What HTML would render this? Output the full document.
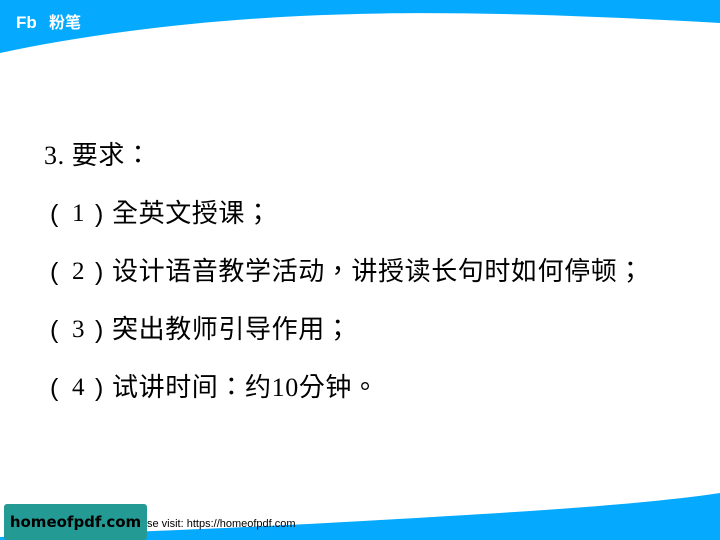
<!DOCTYPE html>
<html><head><meta charset="utf-8"><style>
body{margin:0;width:720px;height:540px;overflow:hidden;background:#fff;position:relative;font-family:"Liberation Serif","Noto Sans CJK TC",sans-serif}
.l{position:absolute;left:112px;font-size:26px;letter-spacing:0.6px;color:#000;white-space:nowrap;line-height:30px}
.a,.b,.d{position:absolute;font-size:25px;line-height:30px;color:#000}
.a{left:-62px;font-family:"Liberation Sans",sans-serif;font-weight:300}
.d{left:-40px}
.b{left:-17px;font-family:"Liberation Sans",sans-serif}
</style></head><body>
<svg width="720" height="540" style="position:absolute;left:0;top:0">
<path d="M0 0H720V23C560 14 420 10 300 16C180 22 80 36 0 53Z" fill="#05a9fd"/>
<path d="M0 540H720V493C640 505 520 512 380 520C260 527 180 530 0 537Z" fill="#05a9fd"/>
<text x="16" y="28" fill="#fff" font-family="Liberation Sans" font-weight="bold" font-size="17">Fb</text>
<text x="49" y="28" fill="#fff" font-family="Noto Sans CJK SC" font-weight="bold" font-size="16">粉笔</text>
</svg>
<div class="l" style="top:141px;left:44px">3. 要求：</div>
<div class="l" style="top:199px"><span class="a">(</span><span class="d">1</span><span class="b">)</span>全英文授课；</div>
<div class="l" style="top:257px"><span class="a">(</span><span class="d">2</span><span class="b">)</span>设计语音教学活动，讲授读长句时如何停顿；</div>
<div class="l" style="top:315px"><span class="a">(</span><span class="d">3</span><span class="b">)</span>突出教师引导作用；</div>
<div class="l" style="top:373px"><span class="a">(</span><span class="d">4</span><span class="b">)</span>试讲时间：约10分钟。</div>
<div style="position:absolute;left:147px;top:518px;font:11px 'Liberation Sans',sans-serif;color:#000">se visit: https://homeofpdf.com</div>
<div style="position:absolute;left:4px;top:504px;width:143px;height:36px;background:#239a94;border-radius:3px;font:bold 15px 'DejaVu Sans',sans-serif;color:#000;line-height:36px;text-align:center">homeofpdf.com</div>
</body></html>
